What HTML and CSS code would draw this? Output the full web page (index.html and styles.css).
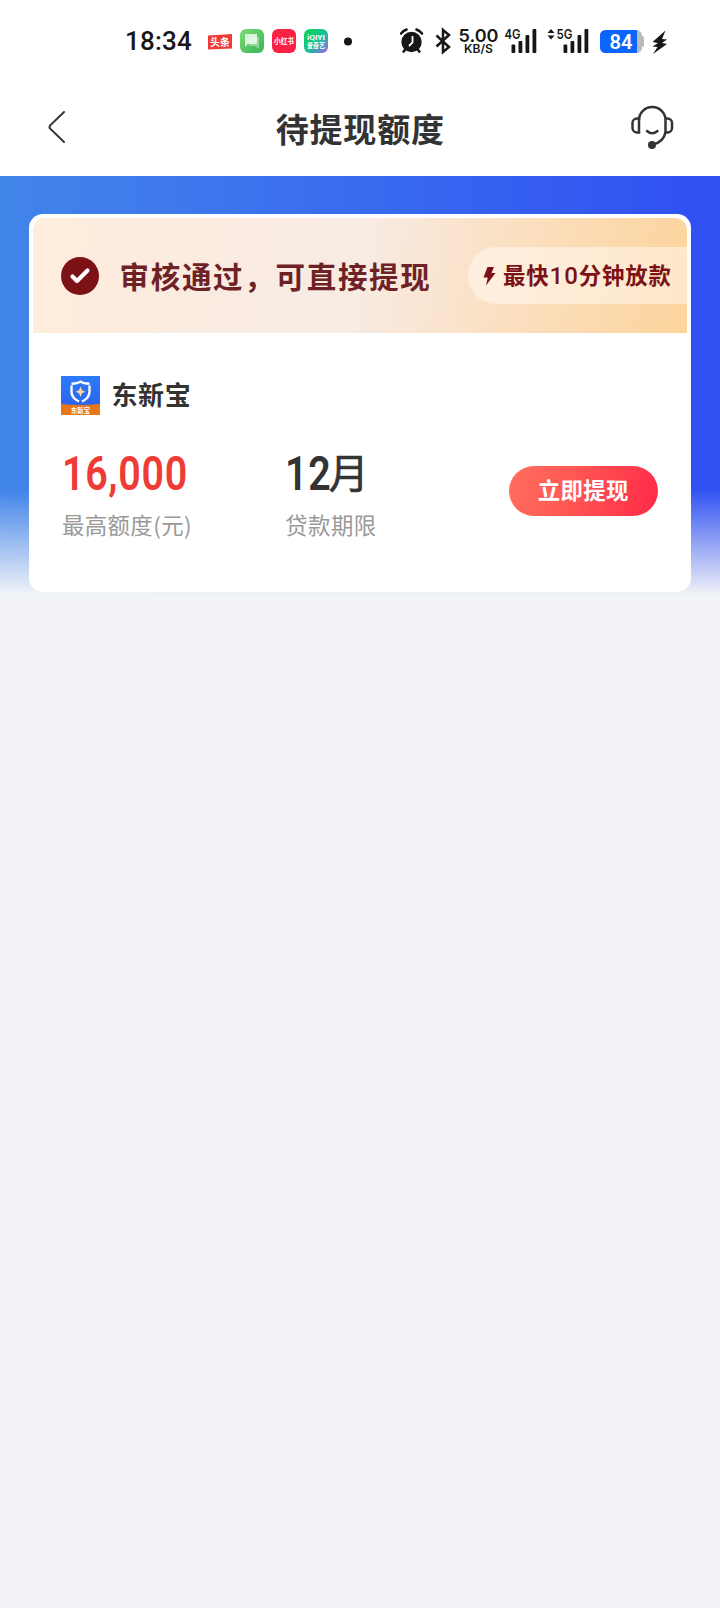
FILE: index.html
```html
<!DOCTYPE html>
<html lang="zh-CN">
<head>
<meta charset="utf-8">
<title>待提现额度</title>
<link rel="stylesheet" href="styles.css">
</head>
<body>
<div class="status">
  <span class="clock">18:34</span>
  <svg class="notes" width="152" height="40" viewBox="0 0 152 40">
    <defs>
      <linearGradient id="green" x1="0" y1="0" x2="1" y2="1"><stop offset="0" stop-color="#7fda78"/><stop offset="1" stop-color="#37b653"/></linearGradient>
      <linearGradient id="qiyi" x1="0" y1="0" x2="1" y2="1"><stop offset="0" stop-color="#08d74d"/><stop offset=".55" stop-color="#14bf9c"/><stop offset="1" stop-color="#a75cf4"/></linearGradient>
    </defs>
    <path d="M0 15.5 24 14V28.500L0 29.500Z" fill="#ee3b38"/>
    <text x="12" y="25.500" class="cjk" font-size="10" text-anchor="middle">头条</text>
    <rect x="32" y="9" width="24" height="24" rx="6" fill="url(#green)"/>
    <path d="M41 17h10v12l-4-3h-6z" fill="#fff" opacity=".35"/>
    <path d="M37 14h12v10H40l-3 3z" fill="#fff" opacity=".75"/>
    <rect x="64" y="9" width="24" height="24" rx="6" fill="#fb2145"/>
    <text x="76" y="24" class="cjk" font-size="7.500" text-anchor="middle" textLength="20" lengthAdjust="spacingAndGlyphs">小红书</text>
    <rect x="96" y="9" width="24" height="24" rx="6" fill="url(#qiyi)"/>
    <text x="108" y="20" class="cjk latin" font-size="7.500" text-anchor="middle" textLength="18" lengthAdjust="spacingAndGlyphs">iQIYI</text>
    <text x="108" y="28" class="cjk" font-size="7" text-anchor="middle" textLength="18" lengthAdjust="spacingAndGlyphs">爱奇艺</text>
    <circle cx="140" cy="21.500" r="4" fill="#151515"/>
  </svg>
  <svg class="system" width="270" height="40" viewBox="400 20 270 40" fill="#171717">
    <circle cx="411.500" cy="42" r="10.200"/>
    <path d="M401 33.500a15 15 0 0 1 5.500-4M416.500 29.500a15 15 0 0 1 5.500 4" fill="none" stroke="#171717" stroke-width="2.600" stroke-linecap="round"/>
    <path d="M405.500 49l-2.500 3.500M417.500 49l2.500 3.500" stroke="#171717" stroke-width="2.500"/>
    <path d="M412.500 36v6.500l-3.500 3.500" fill="none" stroke="#fff" stroke-width="1.800"/>
    <path d="M436.500 35.500l12.500 11.500-6 5V30l6 5-12.500 11.500" fill="none" stroke="#171717" stroke-width="2.500"/>
    <text x="458.500" y="41.500" class="sys" font-size="17.500" textLength="40" lengthAdjust="spacingAndGlyphs">5.00</text>
    <text x="464" y="52.500" class="sys" font-size="11.500" textLength="29" lengthAdjust="spacingAndGlyphs">KB/S</text>
    <text x="504.500" y="39" class="sys" font-size="13.500" textLength="16" lengthAdjust="spacingAndGlyphs">4G</text>
    <rect x="511.500" y="44.500" width="3.800" height="8.500" rx="1"/><rect x="518.500" y="41" width="3.800" height="12" rx="1"/><rect x="525.500" y="35" width="3.800" height="18" rx="1"/><rect x="532.500" y="29" width="3.800" height="24" rx="1"/>
    <path d="M547.500 33l3.500-4 3.500 4zM547.500 35.500l3.500 4 3.500-4z"/>
    <text x="556.500" y="39" class="sys" font-size="13.500" textLength="16" lengthAdjust="spacingAndGlyphs">5G</text>
    <rect x="563.500" y="44.500" width="3.800" height="8.500" rx="1"/><rect x="570.500" y="41" width="3.800" height="12" rx="1"/><rect x="577.500" y="35" width="3.800" height="18" rx="1"/><rect x="584.500" y="29" width="3.800" height="24" rx="1"/>
    <rect x="600" y="30" width="42" height="23" rx="5.500" fill="#b9bbc0"/><rect x="640" y="36" width="4" height="11" rx="2" fill="#b9bbc0"/>
    <path d="M605.500 30H637v23H605.500a5.500 5.500 0 0 1-5.500-5.500v-12a5.500 5.500 0 0 1 5.500-5.500z" fill="#0a66fb"/>
    <text x="609.500" y="48.500" class="latin" font-weight="600" font-size="19.500" fill="#fff" textLength="23" lengthAdjust="spacingAndGlyphs">84</text>
    <path d="M665.500 30.500 652.500 42l5.500 1-5.500 3.500 5 .5-4.500 7L667 44l-5-1 5-3.500-5-.5z"/>
  </svg>
</div>
<header class="nav">
  <svg class="back" width="20" height="34" viewBox="0 0 20 34"><path d="M17 2 3.200 15.400q-1.400 1.600 0 3.200L17 32" fill="none" stroke="#333" stroke-width="2" stroke-linecap="round"/></svg>
  <h1 class="title">待提现额度</h1>
  <svg class="service" width="44" height="46" viewBox="630 104 44 46" fill="none" stroke="#333" stroke-width="2.500">
    <path d="M639 132.500h-2a4.500 4.500 0 0 1-4.500-4.500v-5a4.500 4.500 0 0 1 4.500-4.500h2zM665.500 118.500h2a4.500 4.500 0 0 1 4.500 4.500v5a4.500 4.500 0 0 1-4.500 4.500h-2"/>
    <path d="M639 120a13.250 13 0 0 1 26.500 0v12q-1.500 10-13.500 13"/>
    <path d="M647 131q5 4.500 10.500 0" stroke-linecap="round"/>
    <circle cx="652" cy="145" r="4" fill="#333" stroke="none"/>
  </svg>
</header>
<main class="hero">
  <section class="card">
    <div class="banner">
      <svg class="check" width="38" height="38" viewBox="0 0 38 38"><circle cx="19" cy="19" r="19" fill="#7c1215"/><path d="M11.500 19.500l4.500 4.500 10.500-10.500" fill="none" stroke="#fff" stroke-width="4.200" stroke-linecap="round" stroke-linejoin="round"/></svg>
      <span class="passed">审核通过，可直接提现</span>
      <div class="pill">
        <svg class="bolt" width="13" height="20" viewBox="0 0 13 20"><path d="M4.500 1H11L8.500 7H12.500L3 19.500 4.800 11.500H.5Z" fill="#7c1215"/></svg>
        <span class="fast">最快<span class="count">10</span>分钟放款</span>
      </div>
    </div>
    <div class="product">
      <svg class="logo" width="39" height="39" viewBox="0 0 39 39">
        <defs><linearGradient id="brand" x1="0" y1="0" x2="0" y2="1"><stop offset="0" stop-color="#2d7bfa"/><stop offset="1" stop-color="#2b5ce8"/></linearGradient></defs>
        <path d="M0 0h39v39H0z" fill="url(#brand)"/><path d="M0 28q19.500 2 39 0V39H0z" fill="#e87817"/>
        <path d="M10.500 9.500v6q0 6.500 7.500 10M28.500 9.500v6q0 6.500-7.500 10M10.500 7.700q6-.3 9-2 3 1.700 9 2" fill="none" stroke="#fff" stroke-width="2.400"/>
        <path d="M19.500 10.500l1.500 3.700 3.500 1.500-3.500 1.500-1.500 3.800-1.500-3.800-3.500-1.500 3.500-1.500z" fill="#ffd896"/>
        <text x="19.500" y="36.800" class="cjk" font-size="7" text-anchor="middle" textLength="19" lengthAdjust="spacingAndGlyphs">东新宝</text>
      </svg>
      <span class="name">东新宝</span>
    </div>
    <div class="details">
      <div class="amount"><div class="value red"><span class="digits">16,000</span></div><div class="label">最高额度(元)</div></div>
      <div class="term"><div class="value"><span class="digits">12</span><span class="month">月</span></div><div class="label">贷款期限</div></div>
      <button class="withdraw">立即提现</button>
    </div>
  </section>
</main>
</body>
</html>
```
FILE: styles.css
```css
* { box-sizing: border-box; }
body { margin: 0; min-height: 1608px; background: #f2f3f8; color: #333; font-family: Roboto, "Noto Sans CJK SC", sans-serif; }
svg { display: block; flex: none; }
.status { height: 84px; background: #fff; display: flex; padding: 20px 0 0 125px; }
.clock { width: 83px; font: 500 26px/42px Roboto, sans-serif; letter-spacing: .2px; color: #171717; }
.system { margin-left: 40px; }
.cjk { font-family: "Noto Sans CJK SC", sans-serif; font-weight: 700; fill: #fff; }
.latin { font-family: Roboto, sans-serif; }
.sys { font-family: Inter, sans-serif; font-weight: 600; }
.nav { height: 92px; background: #fff; display: flex; justify-content: space-between; padding: 0 46px 0 47px; }
.back { margin-top: 26px; width: 20px; }
.title { margin: 19px 0 0 23.5px; font: 700 33px/50px "Noto Sans CJK SC", sans-serif; letter-spacing: .8px; }
.service { margin-top: 20px; }
.hero { height: 419px; padding: 38px 29px 0; background: linear-gradient(180deg, rgba(242,243,248,0) 0 314px, #f2f3f8 419px), linear-gradient(90deg, #4285e9, #3c73ee 35%, #3052f2 95%); }
.card { height: 377.5px; border-radius: 14px; background: #fff; padding: 4px; }
.banner { height: 115px; display: flex; align-items: center; padding-left: 28px; border-radius: 12px 12px 0 0; background: linear-gradient(100deg, #ffeddc, #f9ebe2 35%, #f8ebe3 50%, #fbdfc0 73%, #fcd49c); color: #7c1215; }
.passed { margin: -2px 0 0 20.5px; width: 348.5px; white-space: nowrap; font: 700 29.5px/44px "Noto Sans CJK SC", sans-serif; letter-spacing: 1.7px; color: #6e2226; }
.pill { flex: 1; height: 57px; display: flex; align-items: center; padding-left: 15px; border-radius: 29px 0 0 29px; background: linear-gradient(90deg, rgba(255,242,229,.8), rgba(255,238,216,.75)); }
.fast { margin: -2px 0 0 7px; white-space: nowrap; font: 700 22.4px/34px "Noto Sans CJK SC", sans-serif; letter-spacing: .9px; }
.count { font-family: Roboto, sans-serif; font-weight: 500; font-size: 24px; }
.product { display: flex; align-items: center; height: 39px; margin: 43px 0 0 28px; }
.name { margin: -3px 0 0 11.5px; font: 700 26px/38px "Noto Sans CJK SC", sans-serif; letter-spacing: .6px; }
.details { display: flex; padding: 30px 29px 0; }
.amount { width: 223.5px; }
.term { width: 223.5px; }
.value { height: 58px; display: flex; align-items: center; white-space: nowrap; font-weight: 500; }
.digits { font: 600 47.5px/58px Roboto, sans-serif; letter-spacing: .8px; transform: scaleX(.83); transform-origin: left; }
.red { color: #ee3b35; }
.month { margin: -7px 0 0 -12.5px; font: 400 40px/58px "Noto Sans CJK SC", sans-serif; -webkit-text-stroke: .6px #333; }
.label { margin-top: 4px; font: 400 22.4px/34px "Noto Sans CJK SC", sans-serif; letter-spacing: .4px; color: #999; white-space: nowrap; }
.withdraw { margin-top: 21px; width: 149.5px; height: 50px; padding: 0 0 4px; border: 0; border-radius: 25px; background: linear-gradient(105deg, #ff6e5f, #ff5953 40%, #ff2948); color: #fff; font: 700 22.4px/46px "Noto Sans CJK SC", sans-serif; letter-spacing: .4px; }
```
